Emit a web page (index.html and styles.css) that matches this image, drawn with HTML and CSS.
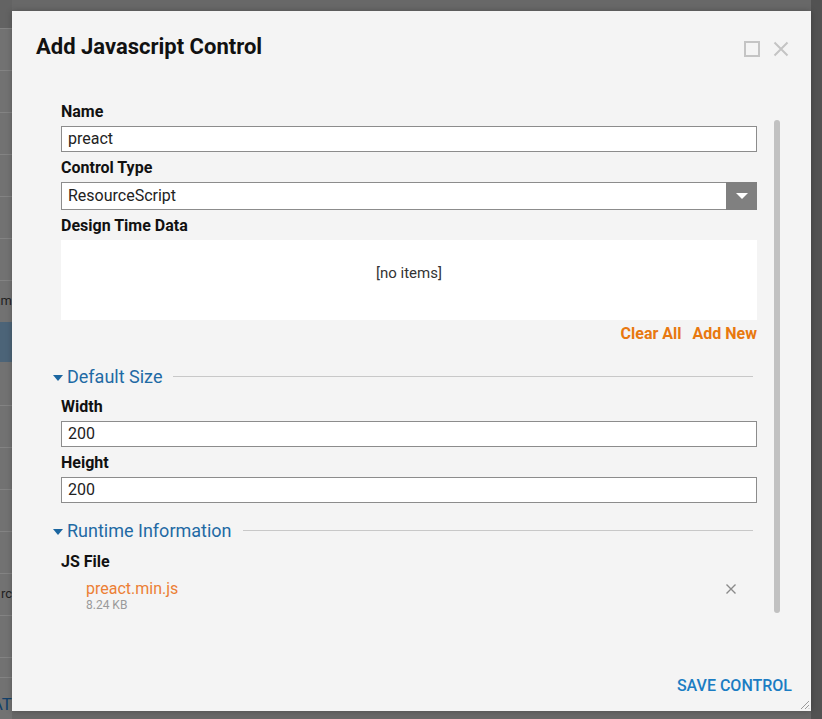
FILE: index.html
```html
<!DOCTYPE html>
<html>
<head>
<meta charset="utf-8">
<link rel="stylesheet" href="styles.css">
</head>
<body>
<div class="page">
  <div class="side-left">
    <div class="row"></div>
    <div class="row"></div>
    <div class="row"></div>
    <div class="row"></div>
    <div class="row"></div>
    <div class="row"></div>
    <div class="row"><span class="frag">am</span></div>
    <div class="row sel"></div>
    <div class="row plain"></div>
    <div class="row"></div>
    <div class="row"></div>
    <div class="row"></div>
    <div class="row"></div>
    <div class="row"><span class="frag">rc</span></div>
    <div class="row"></div>
    <div class="row short"></div>
    <div class="row last"><span class="frag blue">AT</span></div>
  </div>
  <div class="side-right"></div>
</div>

<div class="dialog">
  <div class="dlg-head">
    <h1 class="title">Add Javascript Control</h1>
    <div class="win-icons">
      <svg width="16" height="16" viewBox="0 0 16 16"><rect x="1" y="1" width="14" height="14" fill="none" stroke="#c4c4c4" stroke-width="2"/></svg>
      <svg width="16" height="16" viewBox="0 0 16 16"><path d="M1.5 1.5 L14.5 14.5 M14.5 1.5 L1.5 14.5" stroke="#c4c4c4" stroke-width="2"/></svg>
    </div>
  </div>

  <div class="dlg-body">
    <div class="form">
      <div class="label">Name</div>
      <div class="input">preact</div>

      <div class="label">Control Type</div>
      <div class="select">
        <div class="select-val">ResourceScript</div>
        <div class="select-btn"><span class="tri-down"></span></div>
      </div>

      <div class="label">Design Time Data</div>
      <div class="list-box">[no items]</div>
      <div class="links"><span>Clear All</span><span>Add New</span></div>

      <div class="section sec1">
        <span class="caret"></span>
        <span class="sec-title">Default Size</span>
        <span class="sec-line"></span>
      </div>
      <div class="label">Width</div>
      <div class="input">200</div>
      <div class="label">Height</div>
      <div class="input">200</div>

      <div class="section sec2">
        <span class="caret"></span>
        <span class="sec-title">Runtime Information</span>
        <span class="sec-line"></span>
      </div>
      <div class="label js">JS File</div>
      <div class="file">
        <div class="file-info">
          <div class="file-name">preact.min.js</div>
          <div class="file-size">8.24 KB</div>
        </div>
        <svg class="file-x" width="10" height="10" viewBox="0 0 10 10"><path d="M0.5 0.5 L9.5 9.5 M9.5 0.5 L0.5 9.5" stroke="#8a8a8a" stroke-width="1.4"/></svg>
      </div>
    </div>
    <div class="scrollbar"></div>
  </div>

  <div class="dlg-foot">
    <span class="save">SAVE CONTROL</span>
  </div>
  <svg class="grip" width="11" height="11" viewBox="0 0 11 11"><path d="M10 2 L2 10 M10 6 L6 10 M10 9.5 L9.5 10" stroke="#9a9a9a" stroke-width="1"/></svg>
</div>
</body>
</html>
```

FILE: styles.css
```css
html, body {
  margin: 0;
  padding: 0;
}
body {
  width: 822px;
  height: 719px;
  overflow: hidden;
  background: #686868;
  font-family: Roboto, "Liberation Sans", sans-serif;
  position: relative;
}
.page {
  display: flex;
  justify-content: space-between;
  height: 719px;
}
.side-left {
  width: 12px;
  background: #727272;
  display: flex;
  flex-direction: column;
  padding-top: 28px;
  box-sizing: border-box;
  position: relative;
}
.side-left::before {
  content: "";
  position: absolute;
  left: 0; top: 0; width: 12px; height: 28px;
  background: #636363;
}
.row {
  height: 42px;
  flex: none;
  border-top: 1px solid #838383;
  box-sizing: border-box;
  position: relative;
  overflow: hidden;
}
.sel { background: #4c6478; border-top: 0; height: 40px; }
.plain { height: 43px; border-top: 0; }
.short { height: 20px; }
.last { height: 42px; }
.frag {
  position: absolute;
  right: 0;
  top: 12px;
  font-size: 13px;
  color: #1f1f1f;
  line-height: 16px;
}
.blue { color: #12406a; font-size: 17px; top: 16px; line-height: 20px; }
.side-right {
  width: 11px;
  background: #525252;
}
.dialog {
  position: absolute;
  left: 12px;
  top: 11px;
  width: 799px;
  height: 700px;
  background: #f4f4f4;
  display: flex;
  flex-direction: column;
  box-shadow: 0 0 6px rgba(0,0,0,0.25);
}
.dlg-head {
  display: flex;
  justify-content: space-between;
  align-items: flex-start;
  padding: 23px 22px 0 24px;
  height: 90px;
  box-sizing: border-box;
}
.title {
  margin: 0;
  font-size: 22px;
  line-height: 26px;
  font-weight: 700;
  color: #111;
}
.win-icons {
  display: flex;
  gap: 13px;
  margin-top: 7px;
}
.dlg-body {
  flex: 1;
  display: flex;
  padding-left: 49px;
  min-height: 0;
}
.form {
  width: 696px;
  display: flex;
  flex-direction: column;
}
.label {
  font-size: 16px;
  font-weight: 700;
  color: #111;
  line-height: 22px;
  margin-bottom: 3px;
}
.input {
  height: 26px;
  box-sizing: border-box;
  border: 1px solid #8c8c8c;
  background: #fff;
  font-size: 16px;
  line-height: 24px;
  padding-left: 6px;
  color: #222;
  margin-bottom: 5px;
}
.select {
  height: 28px;
  box-sizing: border-box;
  border: 1px solid #8c8c8c;
  border-right: 0;
  background: #fff;
  display: flex;
  margin-bottom: 5px;
}
.select-val {
  flex: 1;
  font-size: 16px;
  line-height: 26px;
  padding-left: 6px;
  color: #222;
}
.select-btn {
  width: 31px;
  margin-top: -1px;
  margin-bottom: -1px;
  background: #808080;
  display: flex;
  align-items: center;
  justify-content: center;
}
.tri-down {
  width: 0; height: 0;
  border-left: 6px solid transparent;
  border-right: 6px solid transparent;
  border-top: 6px solid #fff;
}
.list-box {
  height: 80px;
  background: #fff;
  display: flex;
  align-items: center;
  justify-content: center;
  font-size: 15px;
  color: #333;
  padding-bottom: 15px;
  box-sizing: border-box;
}
.links {
  display: flex;
  justify-content: flex-end;
  gap: 11px;
  margin-top: 5px;
  font-size: 16px;
  font-weight: 700;
  line-height: 18px;
  color: #e8780f;
}
.section {
  display: flex;
  align-items: center;
  height: 24px;
  margin-left: -8px;
  margin-right: 4px;
}
.sec1 { margin-top: 22px; margin-bottom: 7px; }
.sec2 { margin-top: 11px; margin-bottom: 8px; }
.caret {
  width: 0; height: 0;
  border-left: 5px solid transparent;
  border-right: 5px solid transparent;
  border-top: 6px solid #1b66a0;
  margin-right: 4px;
  margin-top: 2px;
}
.sec-title {
  font-size: 18px;
  color: #1f6aa4;
  line-height: 24px;
}
.sec-line {
  flex: 1;
  height: 1px;
  background: #c8c8c8;
  margin-left: 11px;
  margin-top: -2px;
}
.label.js { margin-bottom: 7px; }
.file {
  display: flex;
  align-items: flex-start;
  justify-content: space-between;
  padding-left: 25px;
  padding-right: 21px;
}
.file-name {
  font-size: 16px;
  line-height: 18px;
  color: #ec7f35;
}
.file-size {
  font-size: 12px;
  line-height: 14px;
  color: #9a9a9a;
}
.file-x {
  margin-top: 4px;
}
.scrollbar {
  width: 6px;
  margin-left: 17px;
  margin-top: 19px;
  height: 493px;
  background: #c1c1c1;
  border-radius: 3px;
}
.dlg-foot {
  display: flex;
  justify-content: flex-end;
  padding: 0 19px 15px 0;
}
.save {
  font-size: 16px;
  line-height: 20px;
  font-weight: 500;
  color: #1b7dc3;
}
.grip {
  position: absolute;
  right: 1px;
  bottom: 1px;
}
```
